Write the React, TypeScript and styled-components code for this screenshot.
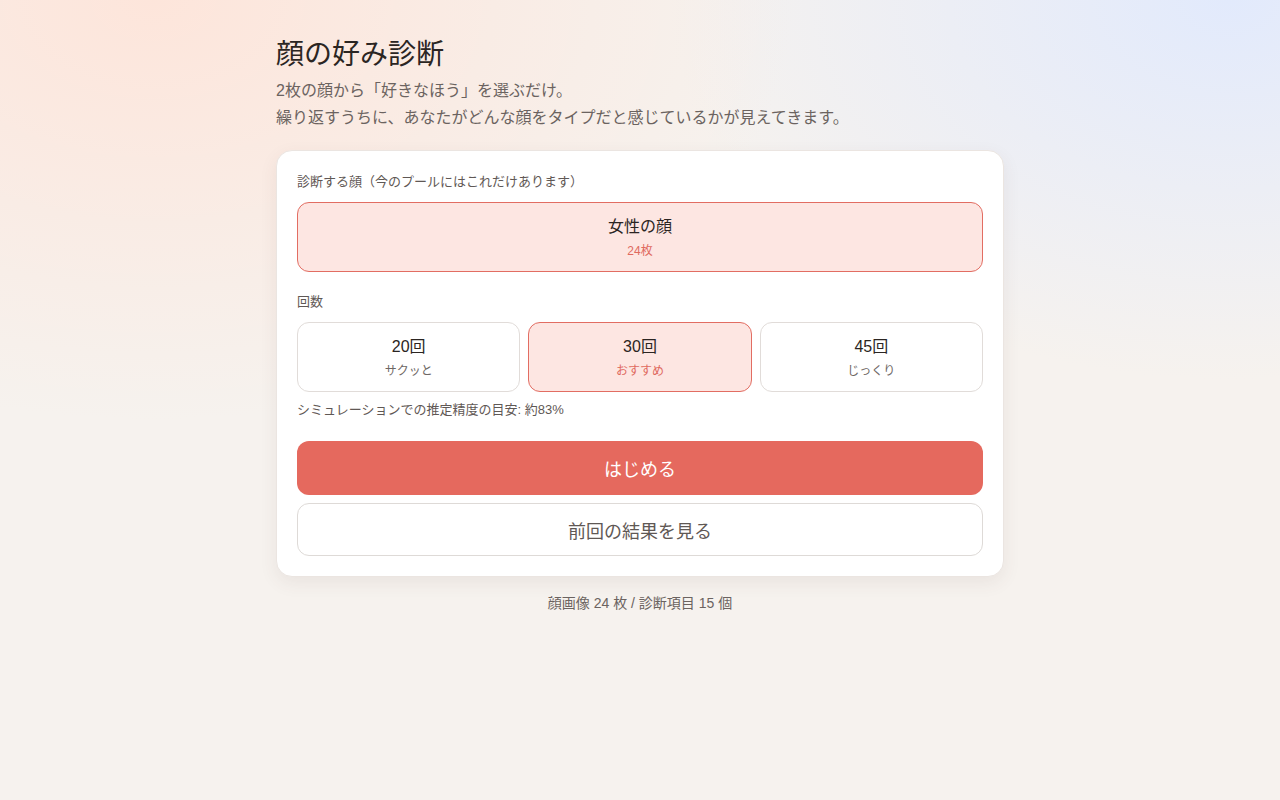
import React from "react"
import styled, { createGlobalStyle } from "styled-components"

const GlobalStyle = createGlobalStyle`
  html, body {
    margin: 0;
    padding: 0;
    min-height: 100%;
  }
  body {
    font-family: "Liberation Sans", "Noto Sans CJK JP", sans-serif;
    color: #2b2522;
    background-color: #f6f2ee;
    background-image:
      radial-gradient(ellipse 640px 420px at 12% 0%, rgba(255, 226, 214, 0.8) 0, rgba(255, 226, 214, 0) 100%),
      radial-gradient(ellipse 560px 380px at 96% 0%, rgba(226, 234, 252, 1) 0, rgba(226, 234, 252, 0) 100%);
    background-repeat: no-repeat;
    min-height: 800px;
  }
`

const counts = [
  { n: 20, note: "サクッと" },
  { n: 30, note: "おすすめ" },
  { n: 45, note: "じっくり" },
]

const App = () => {
  const [count, setCount] = React.useState(30)

  return (
    <>
      <GlobalStyle />
      <Page>
        <Title>顔の好み診断</Title>
        <Lead>
          2枚の顔から「好きなほう」を選ぶだけ。
          <br />
          繰り返すうちに、あなたがどんな顔をタイプだと感じているかが見えてきます。
        </Lead>

        <Card>
          <Label>診断する顔（今のプールにはこれだけあります）</Label>
          <Choice $active>
            <ChoiceTitle>女性の顔</ChoiceTitle>
            <ChoiceNote $active>24枚</ChoiceNote>
          </Choice>

          <Label $spaced>回数</Label>
          <ChoiceRow>
            {counts.map(c => (
              <Choice key={c.n} $active={c.n === count} onClick={() => setCount(c.n)}>
                <ChoiceTitle>{c.n}回</ChoiceTitle>
                <ChoiceNote $active={c.n === count}>{c.note}</ChoiceNote>
              </Choice>
            ))}
          </ChoiceRow>
          <Hint>シミュレーションでの推定精度の目安: 約83%</Hint>

          <Actions>
            <PrimaryButton>はじめる</PrimaryButton>
            <SecondaryButton>前回の結果を見る</SecondaryButton>
          </Actions>
        </Card>

        <Footer>顔画像 24 枚 / 診断項目 15 個</Footer>
      </Page>
    </>
  )
}

export default App

const Page = styled.main`
  width: 728px;
  margin: 0 auto;
  padding: 35px 0 40px;
`

const Title = styled.h1`
  margin: 0 0 3px;
  font-size: 28px;
  line-height: 39px;
  font-weight: 400;
  color: #2b2522;
`

const Lead = styled.p`
  margin: 0;
  font-size: 16px;
  line-height: 27px;
  color: #6b6360;
`

const Card = styled.section`
  margin-top: 19px;
  background: #ffffff;
  border: 1px solid #ebe5e1;
  border-radius: 16px;
  padding: 21px 20px 20px;
  box-shadow: 0 6px 18px rgba(90, 70, 60, 0.08);
`

const Label = styled.div<{ $spaced?: boolean }>`
  margin: ${p => (p.$spaced ? "20px" : "0")} 0 10px;
  font-size: 13px;
  line-height: 20px;
  color: #5f5855;
`

const ChoiceRow = styled.div`
  display: grid;
  grid-template-columns: repeat(3, 1fr);
  gap: 8px;
`

const Choice = styled.button<{ $active?: boolean }>`
  display: flex;
  flex-direction: column;
  align-items: center;
  width: 100%;
  padding: 12px 12px 11px;
  border-radius: 12px;
  border: 1px solid ${p => (p.$active ? "#e26d62" : "#e1dcd9")};
  background: ${p => (p.$active ? "#fde6e2" : "#ffffff")};
  font-family: inherit;
  cursor: pointer;
`

const ChoiceTitle = styled.span`
  font-size: 16px;
  line-height: 24px;
  color: #2b2522;
`

const ChoiceNote = styled.span<{ $active?: boolean }>`
  margin-top: 3px;
  font-size: 12px;
  line-height: 18px;
  color: ${p => (p.$active ? "#e06a5f" : "#6e6764")};
`

const Hint = styled.p`
  margin: 8px 0 0;
  font-size: 13px;
  line-height: 20px;
  color: #5f5855;
`

const Actions = styled.div`
  display: flex;
  flex-direction: column;
  gap: 8px;
  margin-top: 21px;
`

const PrimaryButton = styled.button`
  height: 54px;
  border: none;
  border-radius: 12px;
  background: #e5695e;
  color: #ffffff;
  font-family: inherit;
  font-size: 18px;
  cursor: pointer;
`

const SecondaryButton = styled.button`
  height: 53px;
  border: 1px solid #dedad7;
  border-radius: 12px;
  background: #ffffff;
  color: #5f5855;
  font-family: inherit;
  font-size: 18px;
  cursor: pointer;
`

const Footer = styled.p`
  margin: 16px 0 0;
  text-align: center;
  font-size: 14px;
  line-height: 20px;
  color: #6b6360;
`
